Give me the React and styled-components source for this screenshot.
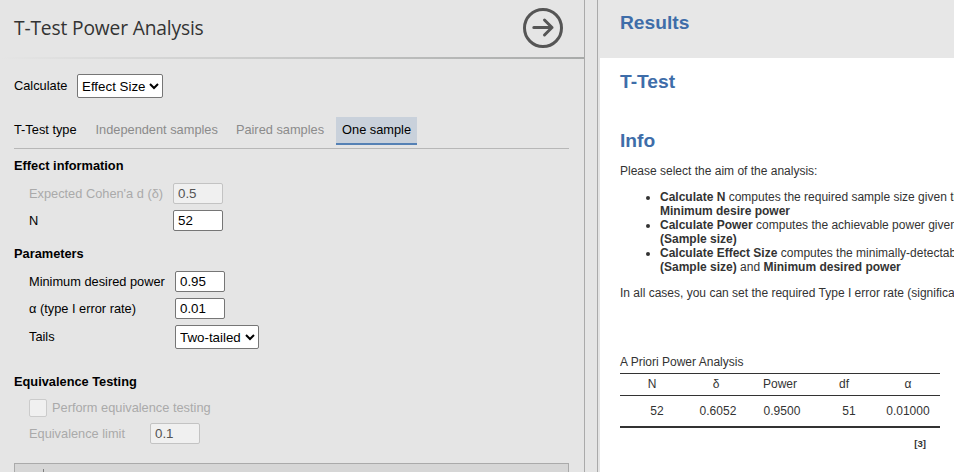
import React from "react";
import styled, { createGlobalStyle, css } from "styled-components";

const Global = createGlobalStyle`
  * { box-sizing: border-box; }
  html, body { margin: 0; height: 100%; overflow: hidden; }
  body { font-family: "Liberation Sans", Arial, sans-serif; }
`;

const Window = styled.div`
  display: flex;
  width: 954px;
  height: 472px;
  overflow: hidden;
  background: #e5e5e5;
`;

const OptionsPanel = styled.section`
  flex: 0 0 585px;
  height: 472px;
  overflow: hidden;
  border-right: 1px solid #aaaaaa;
  font-size: 12.8px;
  line-height: 15px;
  color: #000;
`;

const Splitter = styled.div`
  flex: 0 0 13px;
  border-right: 1px solid #aaaaaa;
`;

const Header = styled.header`
  display: flex;
  justify-content: space-between;
  align-items: center;
  height: 57px;
  padding: 0 21px 1px 14px;
`;

const Title = styled.h1`
  margin: 0;
  font: 400 19.2px/28px "Open Sans", "Noto Sans", sans-serif;
  letter-spacing: -0.15px;
  color: #333;
`;

const HideButton = styled.button`
  display: block;
  width: 40px;
  height: 40px;
  padding: 0;
  border: 0;
  background: none;
  svg { display: block; }
`;

const Rule = styled.div`
  height: 2px;
  background: linear-gradient(to right, #e5e5e5, #a8aaa9);
`;

const Form = styled.div`
  padding: 15px 15px 0 14px;
`;

const Field = styled.div`
  display: flex;
  align-items: center;
  height: ${(p) => p.$height || 21}px;
  margin: 0 0 ${(p) => p.$after ?? 6}px ${(p) => p.$indent ?? 15}px;
`;

const Label = styled.label`
  flex: 0 0 ${(p) => p.$width}px;
  padding-bottom: ${(p) => p.$lift || 0}px;
  white-space: nowrap;
  color: ${(p) => (p.$disabled ? "#aaaaaa" : "#000")};
`;

const control = css`
  margin: 0;
  border: 1px solid #767676;
  border-radius: 2px;
  background: #fff;
  color: #000;
  font: 13.3333px "Liberation Sans", Arial, sans-serif;
`;

const NumberBox = styled.input`
  ${control}
  width: 50px;
  height: 21px;
  padding: 1px 4px;
  &:disabled {
    border-color: #c3c3c3;
    background: #f0f0f0;
    color: #545454;
  }
`;

const Select = styled.select`
  ${control}
  width: ${(p) => p.$width}px;
  height: 24px;
`;

const CheckBox = styled.span`
  flex: 0 0 18px;
  height: 18px;
  margin-right: 5px;
  border: 1px solid #cbcbcb;
  border-radius: 2px;
  background: #f0f0f0;
`;

const TypeBar = styled.div`
  display: flex;
  height: 32px;
  margin: 19px 0 9px;
  border-bottom: 1px solid #b7b7b7;
`;

const TypeName = styled.span`
  width: 75.5px;
  padding-top: 5px;
`;

const Tab = styled.span`
  height: 28px;
  padding: 5px 6px 0;
  margin-right: 6px;
  white-space: nowrap;
  color: ${(p) => (p.$active ? "#000" : "#8b8b8b")};
  background: ${(p) => (p.$active ? "#c9d1db" : "transparent")};
  border-bottom: 2px solid ${(p) => (p.$active ? "#5581b5" : "transparent")};
`;

const GroupTitle = styled.h2`
  margin: 0 0 ${(p) => p.$after}px;
  font-size: 12.8px;
  line-height: 15px;
  font-weight: 700;
`;

const PlotSection = styled.div`
  height: 40px;
  margin-top: 19px;
  padding: 5px 0 0 28px;
  border: 1px solid #aaaaaa;
  background: #d6d6d6;
`;

const PlotDivider = styled.div`
  width: 1px;
  height: 30px;
  background: #808080;
`;

const Results = styled.main`
  flex: 1;
  min-width: 0;
  height: 472px;
  overflow: hidden;
  margin-left: 2px;
  background: #fff;
  color: #333;
  font-size: 12px;
  line-height: 14px;
`;

const ResultsHeader = styled.div`
  height: 58px;
  padding: 12px 0 0 20px;
  background: #e7e7e7;
`;

const Heading = styled.h2`
  margin: 0 0 ${(p) => p.$after || 0}px;
  font-size: 19.2px;
  line-height: 22px;
  font-weight: 700;
  color: #3e6da9;
`;

const ResultsBody = styled.div`
  width: 700px;
  padding: 13px 0 0 20px;
`;

const Paragraph = styled.p`
  margin: 0;
  white-space: nowrap;
`;

const Aims = styled.ul`
  margin: 12px 0;
  padding-left: 40px;
`;

const Table = styled.table`
  width: 320px;
  margin-top: 55px;
  border-collapse: collapse;
  table-layout: fixed;
  caption { text-align: left; height: 18px; }
`;

const HeadCell = styled.th`
  height: 22px;
  padding: 0 0 1px;
  border-top: 1px solid #333;
  border-bottom: 1px solid #333;
  font-weight: 400;
  text-align: center;
`;

const Cell = styled.td`
  height: 31px;
  padding: 1px ${(p) => p.$right}px 0 0;
  border-bottom: 2px solid #333;
  text-align: right;
`;

const Footnote = styled.div`
  width: 306px;
  margin-top: 10px;
  font-size: 9.6px;
  line-height: 12px;
  font-weight: 700;
  text-align: right;
`;

const COLUMNS = [
  { name: "N", value: "52", right: 20.4 },
  { name: "δ", value: "0.6052", right: 11.7 },
  { name: "Power", value: "0.9500", right: 11.7 },
  { name: "df", value: "51", right: 20.4 },
  { name: "α", value: "0.01000", right: 10.4 },
];

const ArrowIcon = () => (
  <svg width="40" height="40" viewBox="0 0 40 40" fill="none" stroke="#555" strokeWidth="3">
    <circle cx="20" cy="20" r="18.5" />
    <path d="M10.8 19.5H29M21.5 12L29 19.5L21.5 27" strokeLinecap="round" strokeLinejoin="round" />
  </svg>
);

export default function App() {
  return (
    <Window>
      <Global />
      <OptionsPanel>
        <Header>
          <Title>T-Test Power Analysis</Title>
          <HideButton aria-label="Hide options"><ArrowIcon /></HideButton>
        </Header>
        <Rule />
        <Form>
          <Field $height={24} $indent={0} $after={0}>
            <Label $width={63} $lift={2}>Calculate</Label>
            <Select $width={86}><option>Effect Size</option></Select>
          </Field>
          <TypeBar>
            <TypeName>T-Test type</TypeName>
            <Tab>Independent samples</Tab>
            <Tab>Paired samples</Tab>
            <Tab $active>One sample</Tab>
          </TypeBar>

          <GroupTitle $after={10}>Effect information</GroupTitle>
          <Field>
            <Label $width={144} $disabled>Expected Cohen'a d (δ)</Label>
            <NumberBox defaultValue="0.5" disabled />
          </Field>
          <Field $after={15}>
            <Label $width={144}>N</Label>
            <NumberBox defaultValue="52" />
          </Field>

          <GroupTitle $after={10}>Parameters</GroupTitle>
          <Field>
            <Label $width={146}>Minimum desired power</Label>
            <NumberBox defaultValue="0.95" />
          </Field>
          <Field>
            <Label $width={146}>α (type I error rate)</Label>
            <NumberBox defaultValue="0.01" />
          </Field>
          <Field $height={24} $after={25}>
            <Label $width={146} $lift={2}>Tails</Label>
            <Select $width={84}><option>Two-tailed</option></Select>
          </Field>

          <GroupTitle $after={10}>Equivalence Testing</GroupTitle>
          <Field $height={18}>
            <CheckBox />
            <Label $disabled $lift={1}>Perform equivalence testing</Label>
          </Field>
          <Field $after={0}>
            <Label $width={121} $disabled>Equivalence limit</Label>
            <NumberBox defaultValue="0.1" disabled />
          </Field>
          <PlotSection><PlotDivider /></PlotSection>
        </Form>
      </OptionsPanel>
      <Splitter />
      <Results>
        <ResultsHeader><Heading>Results</Heading></ResultsHeader>
        <ResultsBody>
          <Heading $after={37}>T-Test</Heading>
          <Heading $after={12}>Info</Heading>
          <Paragraph>Please select the aim of the analysis:</Paragraph>
          <Aims>
            <li><b>Calculate N</b> computes the required sample size given the<br /><b>Minimum desire power</b></li>
            <li><b>Calculate Power</b> computes the achievable power given the<br /><b>(Sample size)</b></li>
            <li><b>Calculate Effect Size</b> computes the minimally-detectable<br /><b>(Sample size)</b> and <b>Minimum desired power</b></li>
          </Aims>
          <Paragraph>In all cases, you can set the required Type I error rate (significance level)</Paragraph>
          <Table>
            <caption>A Priori Power Analysis</caption>
            <thead>
              <tr>{COLUMNS.map((c) => <HeadCell key={c.name}>{c.name}</HeadCell>)}</tr>
            </thead>
            <tbody>
              <tr>{COLUMNS.map((c) => <Cell key={c.name} $right={c.right}>{c.value}</Cell>)}</tr>
            </tbody>
          </Table>
          <Footnote>[3]</Footnote>
        </ResultsBody>
      </Results>
    </Window>
  );
}
